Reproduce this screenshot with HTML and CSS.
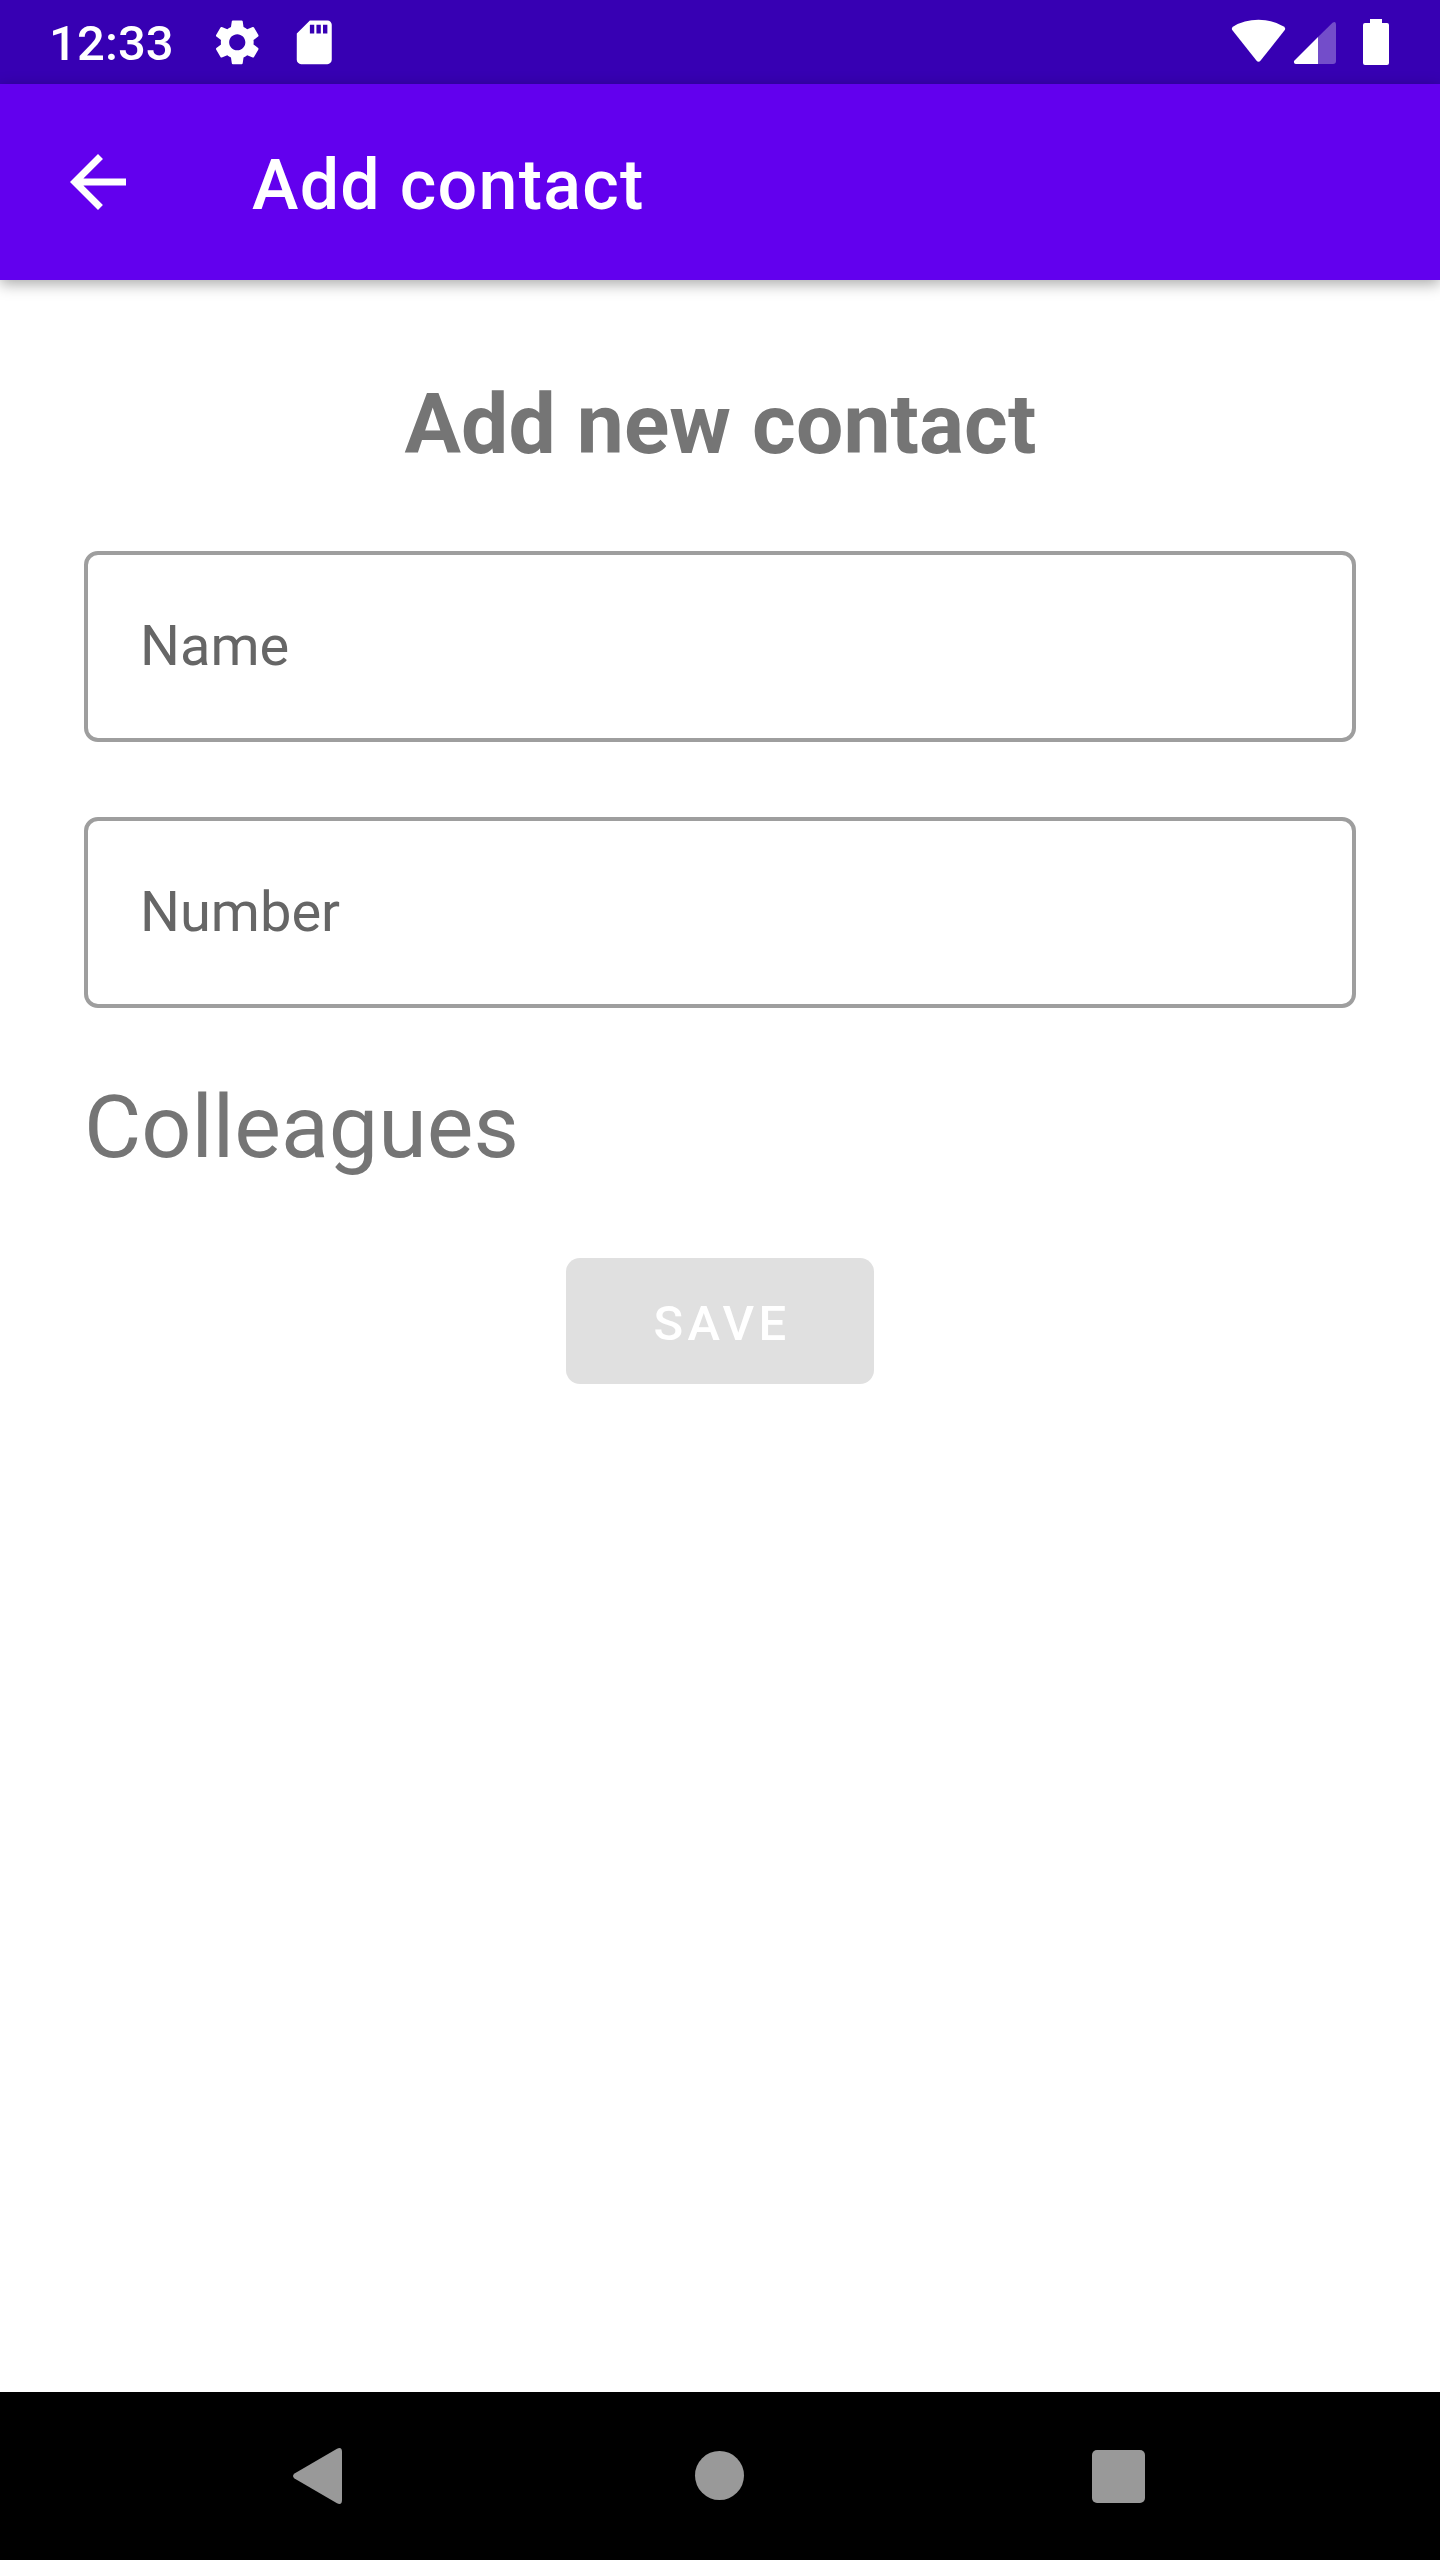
FILE: index.html
```html
<!DOCTYPE html>
<html lang="en">
<head>
<meta charset="utf-8">
<title>Add contact</title>
<link rel="stylesheet" href="styles.css">
</head>
<body>
<div class="screen">
  <div class="status-bar">
    <div class="status-left">
      <span class="clock">12:33</span>
      <svg class="icon-settings" viewBox="0 0 24 24"><path d="M19.43 12.98c.04-.32.07-.64.07-.98s-.03-.66-.07-.98l2.11-1.65c.19-.15.24-.42.12-.64l-2-3.46c-.12-.22-.39-.3-.61-.22l-2.49 1c-.52-.4-1.08-.73-1.69-.98l-.38-2.65C14.46 2.18 14.25 2 14 2h-4c-.25 0-.46.18-.49.42l-.38 2.65c-.61.25-1.17.59-1.69.98l-2.49-1c-.23-.09-.49 0-.61.22l-2 3.46c-.13.22-.07.49.12.64l2.11 1.65c-.04.32-.07.65-.07.98s.03.66.07.98l-2.11 1.65c-.19.15-.24.42-.12.64l2 3.46c.12.22.39.3.61.22l2.49-1c.52.4 1.08.73 1.69.98l.38 2.65c.03.24.24.42.49.42h4c.25 0 .46-.18.49-.42l.38-2.65c.61-.25 1.17-.59 1.69-.98l2.49 1c.23.09.49 0 .61-.22l2-3.46c.12-.22.07-.49-.12-.64l-2.11-1.65zM12 15.7c-2.040 0-3.700-1.660-3.700-3.700s1.660-3.700 3.700-3.700 3.700 1.660 3.700 3.700-1.660 3.700-3.700 3.700z"/></svg>
      <svg class="icon-card" viewBox="0 0 24 24"><path d="M18 2h-8L4.02 8 4 20c0 1.1.9 2 2 2h12c1.1 0 2-.9 2-2V4c0-1.1-.9-2-2-2zm-6 6h-2V4h2v4zm3 0h-2V4h2v4zm3 0h-2V4h2v4z"/></svg>
    </div>
    <svg class="status-right" viewBox="0 0 160 48">
      <path d="M4.6 12.6Q2.8 10.2 5.3 8.6Q16 1.8 30.500 1.800Q45 1.800 55.700 8.600Q58.200 10.200 56.400 12.600L32.600 42.400Q30.500 45 28.400 42.400Z"/>
      <path class="dim" d="M90 19L104.500 4.800Q108 2.500 108 6.500V43Q108 46 105 46H90Z"/>
      <path d="M90 19V46H68Q65.500 46 66 43L67 42Z"/>
      <path d="M142 1H154V5H159Q161 5 161 7V45Q161 47 159 47H137Q135 47 135 45V7Q135 5 137 5H142Z"/>
    </svg>
  </div>
  <header class="app-bar">
    <svg class="back" viewBox="0 0 24 24"><path d="M20 11H7.830l5.590-5.590L12 4l-8 8 8 8 1.410-1.410L7.830 13H20v-2z"/></svg>
    <span class="bar-title">Add contact</span>
  </header>
  <main class="content">
    <h1 class="heading">Add new contact</h1>
    <div class="field">Name</div>
    <div class="field">Number</div>
    <div class="section">Colleagues</div>
    <button class="save" disabled>SAVE</button>
  </main>
  <nav class="nav-bar">
    <svg class="nav-back" viewBox="0 0 49 56"><path d="M44 .7Q49-1.500 49 4V52Q49 57.500 44 55.300L1.500 30.500Q-1.500 28 1.500 25.500Z"/></svg>
    <span class="nav-home"></span>
    <span class="nav-recent"></span>
  </nav>
</div>
</body>
</html>
```
FILE: styles.css
```css
* { box-sizing: border-box; }
body { margin: 0; font-family: Roboto, sans-serif; background: #fff; }
svg { display: block; fill: #fff; overflow: visible; flex: none; }
.screen { width: 1440px; height: 2560px; display: flex; flex-direction: column; }
.status-bar {
  height: 84px;
  flex: none;
  background: #3700b3;
  display: flex;
  align-items: center;
  justify-content: space-between;
  padding: 0 50px 0 49px;
}
.status-left { display: flex; align-items: center; }
.clock { width: 162px; color: #fff; font-size: 49px; font-weight: 500; line-height: 58px; padding-top: 4px; letter-spacing: .1px; }
.icon-settings { width: 52.5px; height: 52.5px; }
.icon-card { width: 52.5px; height: 52.5px; margin-left: 24px; }
.status-right { width: 160px; height: 48px; margin-right: 2px; }
.dim { opacity: .3; }
.app-bar {
  height: 196px;
  flex: none;
  background: #6200ee;
  display: flex;
  align-items: center;
  padding-left: 56px;
  box-shadow: 0 4px 14px rgba(0, 0, 0, .34);
}
.back { width: 84px; height: 84px; }
.bar-title { margin-left: 112px; padding-top: 6px; color: #fff; font-size: 70px; font-weight: 500; line-height: 82px; letter-spacing: 1.25px; }
.content { flex: 1; display: flex; flex-direction: column; padding: 0 84px; }
.heading { margin: 96px 0 77px; padding-left: 1px; font-size: 84px; line-height: 98px; font-weight: 700; color: #757575; text-align: center; letter-spacing: .08px; }
.field {
  height: 191px;
  margin-bottom: 75px;
  padding-left: 52px;
  border: 4px solid #9e9e9e;
  border-radius: 14px;
  color: #666;
  font-size: 56px;
  line-height: 183px;
}
.section { margin-top: -7px; font-size: 88px; line-height: 102px; color: #757575; }
.save {
  width: 308px;
  height: 126px;
  margin-top: 80px;
  align-self: center;
  padding: 5px 0 0 4px;
  border: 0;
  border-radius: 14px;
  background: #e0e0e0;
  color: #fff;
  font: 500 49px/58px Roboto, sans-serif;
  letter-spacing: 4.375px;
}
.nav-bar {
  height: 168px;
  flex: none;
  background: #000;
  display: flex;
  align-items: center;
  justify-content: space-between;
  padding: 0 295px 0 293px;
}
.nav-back { width: 49px; height: 56px; fill: #999; }
.nav-home { width: 49px; height: 49px; margin: 0 0 1px 4px; border-radius: 50%; background: #999; }
.nav-recent { width: 53px; height: 53px; border-radius: 5px; background: #999; }
```
